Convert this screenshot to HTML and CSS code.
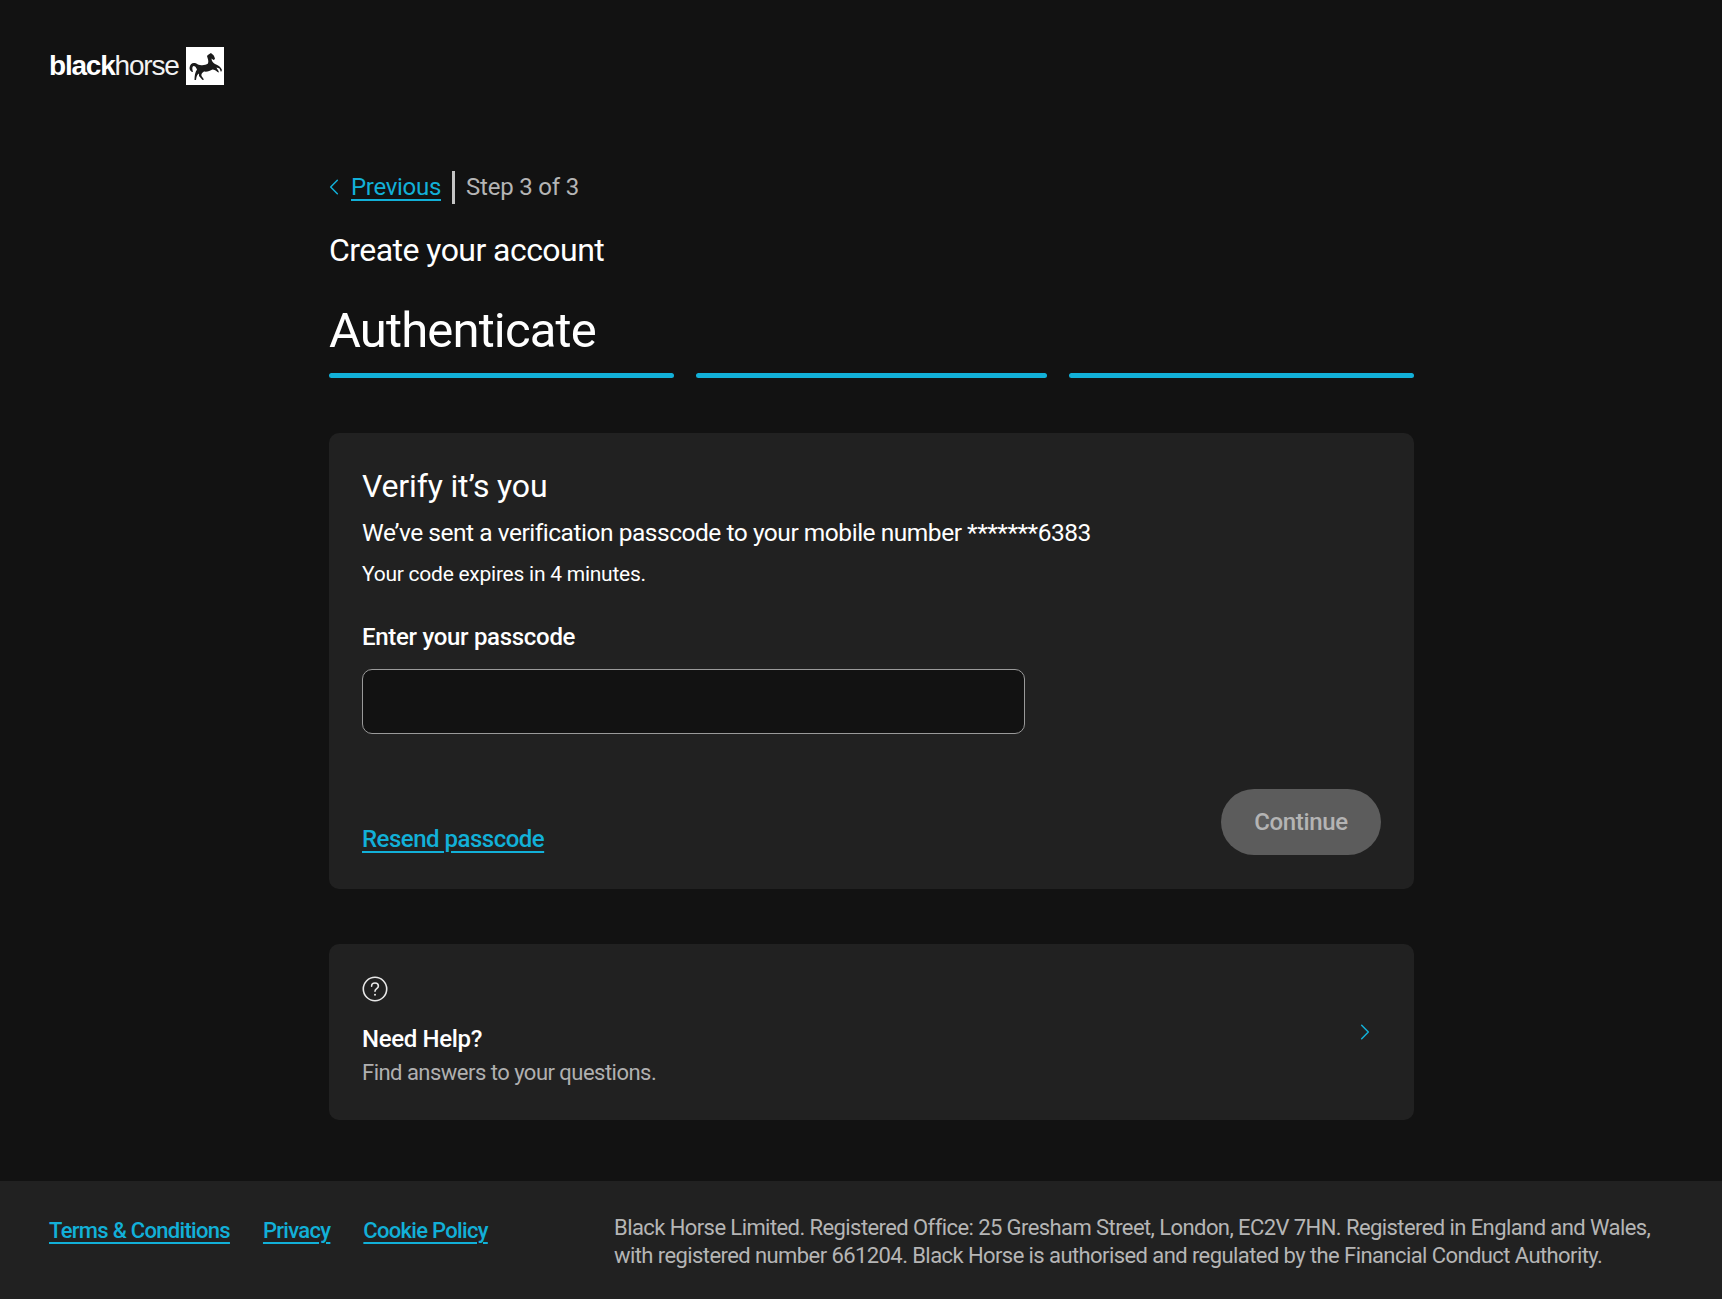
FILE: index.html
```html
<!DOCTYPE html>
<html lang="en">
<head>
<meta charset="utf-8">
<title>Authenticate</title>
<link rel="stylesheet" href="styles.css">
</head>
<body>
<div class="page">
  <header class="top">
    <div class="logo">
      <span class="wordmark"><b>black</b>horse</span>
      <span class="logo-box">
        <svg viewBox="0 0 38 38" width="38" height="38" aria-hidden="true">
          <path class="horse" d="M3.5 21C4 17 6 15.500 9 16c2 .5 3 2 5 2 3 .5 6 0 8-1.500 1-2.500-.5-5.500-1-7.500 1-1.500 3-2.500 4-3l1 1c1.500.5 2.500 2.500 3 5l-1.500 1-2-1.500c0 2.500 1.500 4.500 3.500 5.500 3 1 6 3 7 6l-1 2-1.500-3.500-3-1c.5 1.500 2 3 2.500 5l-1.500-.5c-1.500-1.500-3-2.500-5-2.500-2.500 1.500-5.500 2.500-8.500 2-2 1.500-3 2.500-2.500 4.500l2.500 3.500-1.500.5-3.500-4v-2.500c-2 1-2.500 3-3 6.500H8.500c0-4 .5-8 2.500-10.500-1-2.500-2-3.500-3.500-3.500-1.500.5-1.500 3-.5 6-2 0-3.500-2-3.500-4z"/>
        </svg>
      </span>
    </div>
  </header>
  <main class="content">
    <nav class="crumb">
      <svg class="chev" viewBox="0 0 12 20" width="10" height="18" aria-hidden="true"><path d="M10 2 2 10l8 8"/></svg>
      <a class="link" href="#">Previous</a>
      <span class="sep"></span>
      <span class="step">Step 3 of 3</span>
    </nav>
    <p class="eyebrow">Create your account</p>
    <h1 class="title">Authenticate</h1>
    <div class="progress"><span></span><span class="mid"></span><span></span></div>
    <section class="card verify">
      <h2 class="card-title">Verify it’s you</h2>
      <p class="lead">We’ve sent a verification passcode to your mobile number *******6383</p>
      <p class="note">Your code expires in 4 minutes.</p>
      <label class="label" for="code">Enter your passcode</label>
      <input class="input" id="code" type="text">
      <div class="actions">
        <a class="link strong resend" href="#">Resend passcode</a>
        <button class="btn" type="button">Continue</button>
      </div>
    </section>
    <section class="card help">
      <div class="help-text">
        <svg class="q" viewBox="0 0 26 26" width="26" height="26" aria-hidden="true">
          <circle cx="13" cy="13" r="11.700"/>
          <path d="M9.600 10.200c0-2 1.500-3.200 3.400-3.200s3.400 1.200 3.400 3c0 2.600-3.400 2.600-3.400 5.200"/>
          <circle class="dot" cx="13" cy="18.800" r="1"/>
        </svg>
        <h3 class="help-title">Need Help?</h3>
        <p class="help-sub">Find answers to your questions.</p>
      </div>
      <svg class="chev next" viewBox="0 0 12 20" width="10" height="18" aria-hidden="true"><path d="M2 2l8 8-8 8"/></svg>
    </section>
  </main>
  <footer class="foot">
    <div class="foot-links">
      <a class="link strong" href="#">Terms &amp; Conditions</a>
      <a class="link strong" href="#">Privacy</a>
      <a class="link strong" href="#">Cookie Policy</a>
    </div>
    <p class="legal">Black Horse Limited. Registered Office: 25 Gresham Street, London, EC2V 7HN. Registered in England and Wales, with registered number 661204. Black Horse is authorised and regulated by the Financial Conduct Authority.</p>
  </footer>
</div>
</body>
</html>
```
FILE: styles.css
```css
* { box-sizing: border-box; }
html, body { margin: 0; padding: 0; }
body {
  background: #121212;
  color: #fff;
  font-family: Roboto, "Noto Sans", sans-serif;
}
p, h1, h2, h3 { margin: 0; font-weight: 400; }
.page { width: 1722px; height: 1299px; display: flex; flex-direction: column; overflow: hidden; }
.top { height: 170px; padding: 47px 49px 0; }
.logo { display: flex; align-items: center; gap: 7px; height: 38px; }
.wordmark { font-family: "Liberation Sans", sans-serif; font-size: 28px; letter-spacing: -1.2px; color: #f2f2f2; }
.wordmark b { font-weight: 700; color: #fff; }
.logo-box { width: 38px; height: 38px; background: #fff; display: block; }
.horse { fill: #1a1a1a; }
.content { width: 1085px; margin-left: 329px; flex: 1; }
.crumb { display: flex; align-items: center; height: 34px; font-size: 24px; letter-spacing: -0.3px; }
.chev { fill: none; stroke: #12b0d8; stroke-width: 1.8; stroke-linecap: round; stroke-linejoin: round; flex: none; }
.crumb .chev { margin-right: 12px; }
.link { color: #12b0d8; text-decoration: underline; text-underline-offset: 4px; text-decoration-thickness: 2px; }
.sep { width: 3px; height: 33px; background: #c4c4c4; margin: 0 11px; }
.step { color: #b5b5b5; letter-spacing: -0.2px; }
.eyebrow { margin-top: 24px; font-size: 32px; line-height: 44px; letter-spacing: -0.55px; }
.title { margin-top: 27px; font-size: 49px; line-height: 64px; letter-spacing: -0.85px; }
.progress { margin-top: 10px; display: flex; gap: 22px; }
.progress span { flex: 345; height: 5px; border-radius: 3px; background: #12b0d8; }
.progress .mid { flex: 351; }
.card { background: #212121; border-radius: 10px; padding: 0 33px; }
.verify { margin-top: 55px; height: 456px; padding-top: 30px; display: flex; flex-direction: column; }
.card-title { font-size: 32px; line-height: 46px; letter-spacing: -0.15px; }
.lead { margin-top: 6px; font-size: 24.500px; line-height: 36px; letter-spacing: -0.47px; }
.note { margin-top: 7px; font-size: 21px; line-height: 32px; letter-spacing: -0.25px; }
.label { display: block; margin-top: 30px; font-size: 24px; line-height: 34px; font-weight: 500; letter-spacing: -0.3px; }
.input { display: block; margin-top: 15px; width: 663px; height: 65px; background: #121212; border: 1px solid #9a9a9a; border-radius: 10px; }
.actions { margin-top: 55px; display: flex; justify-content: space-between; align-items: flex-end; }
.actions .link { line-height: 36px; margin-bottom: -2px; }
.strong { font-weight: 500; }
.resend { font-size: 24px; letter-spacing: -0.5px; }
.btn { width: 160px; height: 66px; border: 0; border-radius: 33px; background: #5c5c5c; color: #b4b4b4; font: 500 24px Roboto, sans-serif; letter-spacing: -0.33px; }
.help { margin-top: 55px; height: 176px; display: flex; justify-content: space-between; align-items: center; padding-right: 44px; }
.q { display: block; fill: none; stroke: #e8e8e8; stroke-width: 1.6; stroke-linecap: round; }
.q .dot { fill: #e8e8e8; stroke: none; }
.help-title { margin-top: 20px; font-size: 24px; line-height: 34px; font-weight: 500; letter-spacing: -0.33px; }
.help-sub { margin-top: 1px; font-size: 22px; line-height: 32px; color: #b0b0b0; letter-spacing: -0.52px; }
.next { margin-top: -1px; }
.foot { height: 118px; background: #212121; padding: 33px 49px 0; display: flex; align-items: flex-start; justify-content: space-between; }
.foot-links { display: flex; gap: 33px; padding-top: 4px; font-size: 22px; letter-spacing: -0.7px; }
.legal { width: 1059px; font-size: 22px; line-height: 27.500px; color: #b5b5b5; letter-spacing: -0.58px; }
```
